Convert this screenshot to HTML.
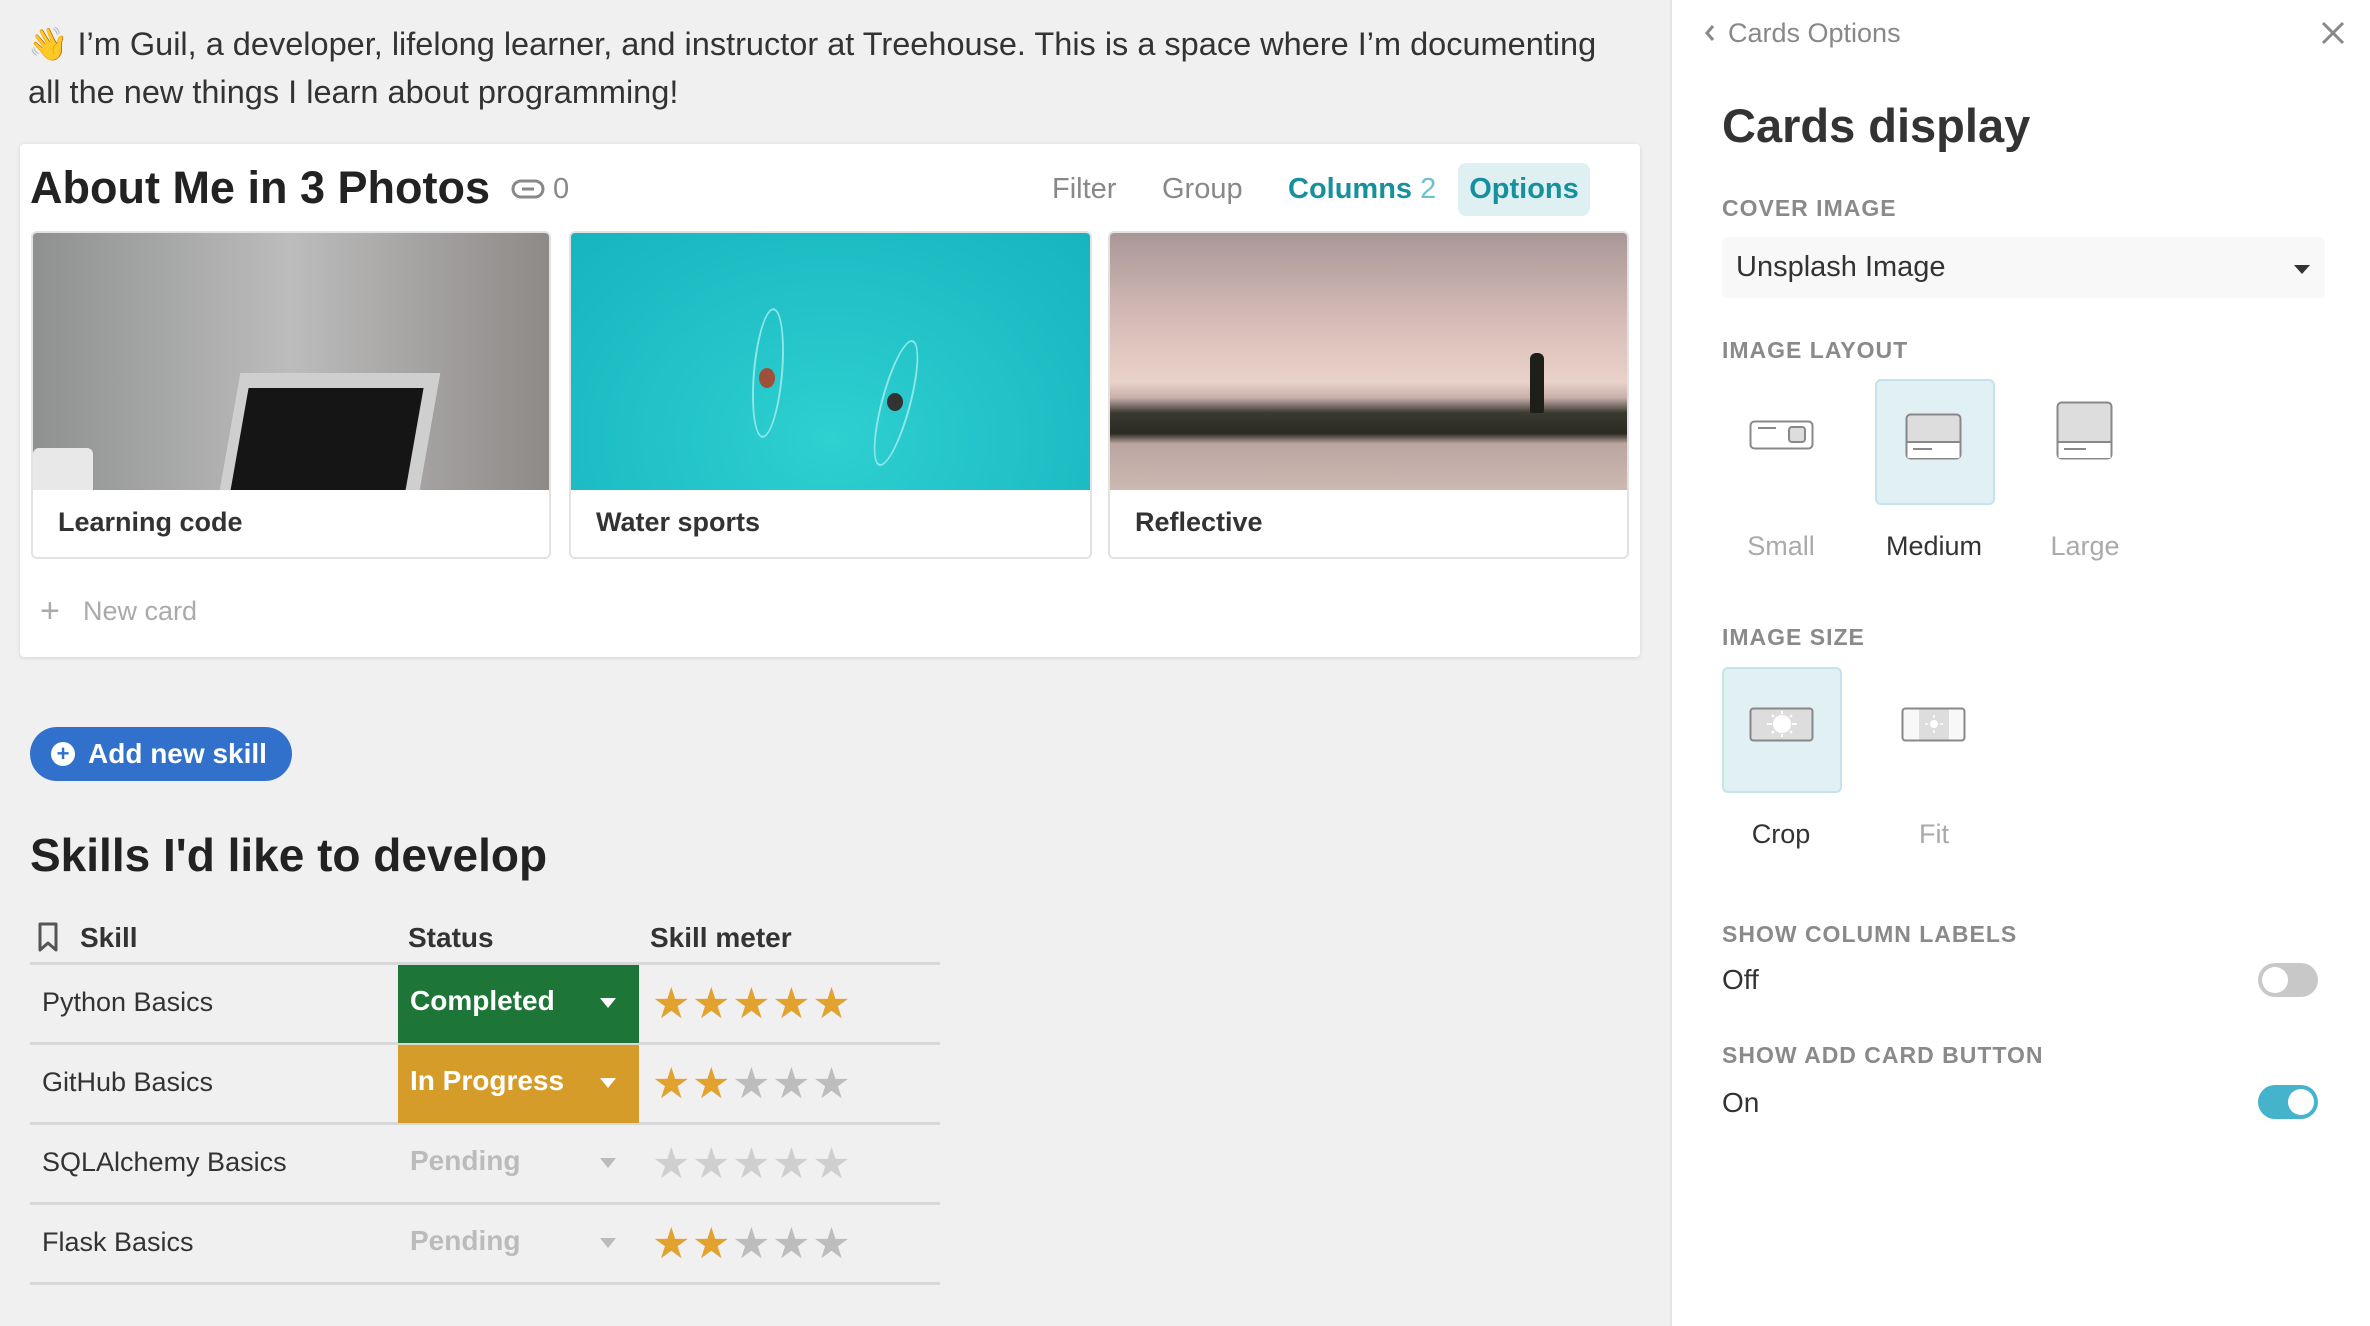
<!DOCTYPE html>
<html><head><meta charset="utf-8"><style>
*{margin:0;padding:0;box-sizing:border-box}
body{width:2370px;height:1326px;background:#f0f0f0;font-family:"Liberation Sans",sans-serif;position:relative;overflow:hidden;color:#333}
.a{position:absolute;white-space:nowrap}
.side{position:absolute;left:1670px;top:0;width:700px;height:1326px;background:#fff;border-left:2px solid #e4e4e4}
.lbl{position:absolute;left:50px;font-size:23px;font-weight:bold;color:#8a8a8a;letter-spacing:1px}
.card{position:absolute;top:231px;height:328px;background:#fff;border:2px solid #e2e2e2;border-radius:6px;overflow:hidden}
.card .img{height:257px;overflow:hidden;position:relative}
.card .t{position:absolute;left:25px;top:274px;font-size:27px;font-weight:bold;color:#333}
.row{position:absolute;left:30px;width:910px;height:80px;border-bottom:3px solid #d8d8d8}
.row .n{position:absolute;left:12px;top:22px;font-size:27px;color:#333}
.st{position:absolute;left:368px;top:0;width:241px;height:78px;font-size:28px;font-weight:bold;color:#fff}
.st span{position:absolute;left:12px;top:20px}
.st i{position:absolute;left:202px;top:33px;border:8px solid transparent;border-top:10px solid currentColor;border-bottom:0}
.stars{position:absolute;left:622px;top:16px;font-size:43px;letter-spacing:1.5px;line-height:46px}
.g{color:#e3a12f}.x{color:#bdbdbd}
.opt{position:absolute;width:120px;height:126px;border-radius:6px}
.opt.sel{background:#e0f0f3;border:2px solid #c3e4ea}
.ol{position:absolute;font-size:27px;transform:translateX(-50%)}
</style></head><body>
<div class="a" style="left:28px;top:20px;font-size:32.5px;color:#333;line-height:48px">👋 I’m Guil, a developer, lifelong learner, and instructor at Treehouse. This is a space where I’m documenting<br>all the new things I learn about programming!</div>

<div style="position:absolute;left:20px;top:144px;width:1620px;height:513px;background:#fff;border-radius:4px;box-shadow:0 1px 4px rgba(0,0,0,.12)"></div>
<div class="a" style="left:30px;top:162px;font-size:45px;font-weight:bold;color:#222">About Me in 3 Photos</div>
<svg class="a" style="left:511px;top:178px" width="34" height="22" viewBox="0 0 34 22"><rect x="2" y="3" width="30" height="16" rx="8" fill="none" stroke="#888" stroke-width="3"/><path d="M11 11h12" stroke="#888" stroke-width="3"/></svg>
<div class="a" style="left:553px;top:173px;font-size:29px;color:#888">0</div>
<div class="a" style="left:1052px;top:173px;font-size:29px;color:#888">Filter</div>
<div class="a" style="left:1162px;top:173px;font-size:29px;color:#888">Group</div>
<div class="a" style="left:1288px;top:173px;font-size:29px;color:#17909e;font-weight:bold">Columns <span style="color:#6cc2cc;font-weight:normal">2</span></div>
<div class="a" style="left:1458px;top:163px;width:132px;height:53px;background:#dff0f3;border-radius:8px;font-size:29px;color:#17909e;font-weight:bold;text-align:center;line-height:53px">Options</div>

<div class="card" style="left:31px;width:520px"><div class="img" style="background:linear-gradient(90deg,#8f9090,#bcbcbc 50%,#8e8a88)">
<div style="position:absolute;left:195px;top:140px;width:200px;height:140px;background:#cfcfcf;transform:skewX(-10deg)"></div>
<div style="position:absolute;left:205px;top:155px;width:175px;height:120px;background:#151515;transform:skewX(-10deg)"></div>
<div style="position:absolute;left:0;top:215px;width:60px;height:60px;background:#e8e8e8;border-radius:6px"></div></div><div class="t">Learning code</div></div>
<div class="card" style="left:569px;width:523px"><div class="img" style="background:radial-gradient(ellipse at 50% 80%,#2ed0d0,#1fbfc6 60%,#17b4bd)">
<div style="position:absolute;left:182px;top:75px;width:30px;height:130px;border:2px solid #8fe6e8;border-radius:50%;transform:rotate(5deg)"></div>
<div style="position:absolute;left:188px;top:135px;width:16px;height:20px;background:#a0503a;border-radius:50%"></div>
<div style="position:absolute;left:310px;top:105px;width:30px;height:130px;border:2px solid #8fe6e8;border-radius:50%;transform:rotate(15deg)"></div>
<div style="position:absolute;left:316px;top:160px;width:16px;height:18px;background:#333;border-radius:50%"></div></div><div class="t">Water sports</div></div>
<div class="card" style="left:1108px;width:521px"><div class="img" style="background:linear-gradient(180deg,#a99797 0%,#d7bdb8 35%,#e9d2c9 58%,#c8b0ab 64%,#3a3a30 70%,#2a2a22 78%,#bba5a0 82%,#cdb8b2 100%)">
<div style="position:absolute;left:420px;top:120px;width:14px;height:60px;background:#1f1f1a;border-radius:6px 6px 2px 2px"></div></div><div class="t">Reflective</div></div>

<div class="a" style="left:40px;top:592px;font-size:34px;color:#aaa;font-weight:300">+</div>
<div class="a" style="left:83px;top:596px;font-size:27px;color:#aaa">New card</div>

<div class="a" style="left:30px;top:727px;width:262px;height:54px;background:#3171cc;border-radius:27px"></div>
<div class="a" style="left:51px;top:742px;width:24px;height:24px;background:#fff;border-radius:50%;color:#3171cc;font-size:22px;line-height:24px;text-align:center;font-weight:bold">+</div>
<div class="a" style="left:88px;top:738px;font-size:28px;color:#fff;font-weight:bold">Add new skill</div>

<div class="a" style="left:30px;top:828px;font-size:46px;font-weight:bold;color:#222">Skills I'd like to develop</div>
<svg class="a" style="left:38px;top:922px" width="20" height="30" viewBox="0 0 20 30"><path d="M2 2h16v26l-8-7-8 7z" fill="none" stroke="#555" stroke-width="3" stroke-linejoin="round"/></svg>
<div class="a" style="left:80px;top:922px;font-size:28px;font-weight:bold;color:#333">Skill</div>
<div class="a" style="left:408px;top:922px;font-size:28px;font-weight:bold;color:#333">Status</div>
<div class="a" style="left:650px;top:922px;font-size:28px;font-weight:bold;color:#333">Skill meter</div>
<div class="a" style="left:30px;top:962px;width:910px;height:3px;background:#d8d8d8"></div>

<div class="row" style="top:965px"><div class="n">Python Basics</div><div class="st" style="background:#1e7538"><span>Completed</span><i></i></div><div class="stars"><span class="g">★★★★★</span></div></div>
<div class="row" style="top:1045px"><div class="n">GitHub Basics</div><div class="st" style="background:#d69c2a"><span>In Progress</span><i></i></div><div class="stars"><span class="g">★★</span><span class="x">★★★</span></div></div>
<div class="row" style="top:1125px"><div class="n">SQLAlchemy Basics</div><div class="st" style="color:#bbb"><span>Pending</span><i></i></div><div class="stars"><span class="x" style="color:#cfcfcf">★★★★★</span></div></div>
<div class="row" style="top:1205px"><div class="n">Flask Basics</div><div class="st" style="color:#bbb"><span>Pending</span><i></i></div><div class="stars"><span class="g">★★</span><span class="x">★★★</span></div></div>

<div class="side">
<svg class="a" style="left:31px;top:23px" width="14" height="20" viewBox="0 0 14 20"><path d="M10 3L4 10l6 7" fill="none" stroke="#888" stroke-width="3"/></svg>
<div class="a" style="left:56px;top:18px;font-size:27px;color:#888">Cards Options</div>
<svg class="a" style="left:648px;top:20px" width="26" height="26" viewBox="0 0 26 26"><path d="M3 3l20 20M23 3L3 23" stroke="#888" stroke-width="3"/></svg>
<div class="a" style="left:50px;top:98px;font-size:47px;font-weight:bold;color:#333">Cards display</div>
<div class="lbl" style="top:195px">COVER IMAGE</div>
<div class="a" style="left:50px;top:237px;width:603px;height:61px;background:#f8f8f8;border-radius:6px"></div>
<div class="a" style="left:64px;top:251px;font-size:29px;color:#333">Unsplash Image</div>
<div class="a" style="left:622px;top:265px;border:8px solid transparent;border-top:9px solid #333;border-bottom:0"></div>
<div class="lbl" style="top:337px">IMAGE LAYOUT</div>
<div class="opt sel" style="left:203px;top:379px"></div>
<svg class="a" style="left:77px;top:420px" width="66" height="32"><rect x="1.5" y="1.5" width="62" height="27" rx="4" fill="#fff" stroke="#888" stroke-width="2"/><rect x="40" y="7" width="16" height="15" rx="3" fill="#ddd" stroke="#888" stroke-width="2"/><path d="M9 8h18" stroke="#888" stroke-width="2"/></svg>
<svg class="a" style="left:233px;top:413px" width="58" height="50"><rect x="1.5" y="1.5" width="54" height="44" rx="4" fill="#ddd" stroke="#888" stroke-width="2"/><path d="M2 29h54" stroke="#888" stroke-width="2"/><rect x="2.5" y="30" width="52" height="15" fill="#fff"/><path d="M8 36h19" stroke="#888" stroke-width="2"/></svg>
<svg class="a" style="left:384px;top:401px" width="58" height="60"><rect x="1.5" y="1.5" width="54" height="56" rx="4" fill="#ddd" stroke="#888" stroke-width="2"/><rect x="2.5" y="42" width="52" height="15" fill="#fff"/><path d="M2 41h54" stroke="#888" stroke-width="2"/><path d="M8 48h22" stroke="#888" stroke-width="2"/></svg>
<div class="ol" style="left:109px;top:531px;color:#aaa">Small</div>
<div class="ol" style="left:262px;top:531px;color:#333">Medium</div>
<div class="ol" style="left:413px;top:531px;color:#aaa">Large</div>
<div class="lbl" style="top:624px">IMAGE SIZE</div>
<div class="opt sel" style="left:50px;top:667px"></div>
<svg class="a" style="left:77px;top:707px" width="66" height="36"><rect x="1.5" y="1.5" width="62" height="32" rx="3" fill="#ddd" stroke="#888" stroke-width="2"/><circle cx="33" cy="17" r="9" fill="#fff"/><path d="M33 4v3M33 27v3M18 17h5M43 17h5M23 8l2 2M43 8l-2 2M23 26l2-2M43 26l-2-2" stroke="#fff" stroke-width="2"/></svg>
<svg class="a" style="left:229px;top:707px" width="66" height="36"><rect x="1.5" y="1.5" width="62" height="32" rx="3" fill="#f8f8f8" stroke="#888" stroke-width="2"/><rect x="18" y="2.5" width="30" height="30" fill="#ddd"/><circle cx="33" cy="17" r="4" fill="#fff"/><path d="M33 8v3M33 23v3M24 17h3M39 17h3" stroke="#fff" stroke-width="1.5"/></svg>
<div class="ol" style="left:109px;top:819px;color:#333">Crop</div>
<div class="ol" style="left:262px;top:819px;color:#aaa">Fit</div>
<div class="lbl" style="top:921px">SHOW COLUMN LABELS</div>
<div class="a" style="left:50px;top:964px;font-size:28px;color:#333">Off</div>
<div class="a" style="left:586px;top:963px;width:60px;height:34px;border-radius:17px;background:#c8c8c8"><div style="position:absolute;left:4px;top:4px;width:26px;height:26px;border-radius:50%;background:#fff"></div></div>
<div class="lbl" style="top:1042px">SHOW ADD CARD BUTTON</div>
<div class="a" style="left:50px;top:1087px;font-size:28px;color:#333">On</div>
<div class="a" style="left:586px;top:1085px;width:60px;height:34px;border-radius:17px;background:#45b3cc"><div style="position:absolute;left:30px;top:4px;width:26px;height:26px;border-radius:50%;background:#fff"></div></div>
</div>
</body></html>
